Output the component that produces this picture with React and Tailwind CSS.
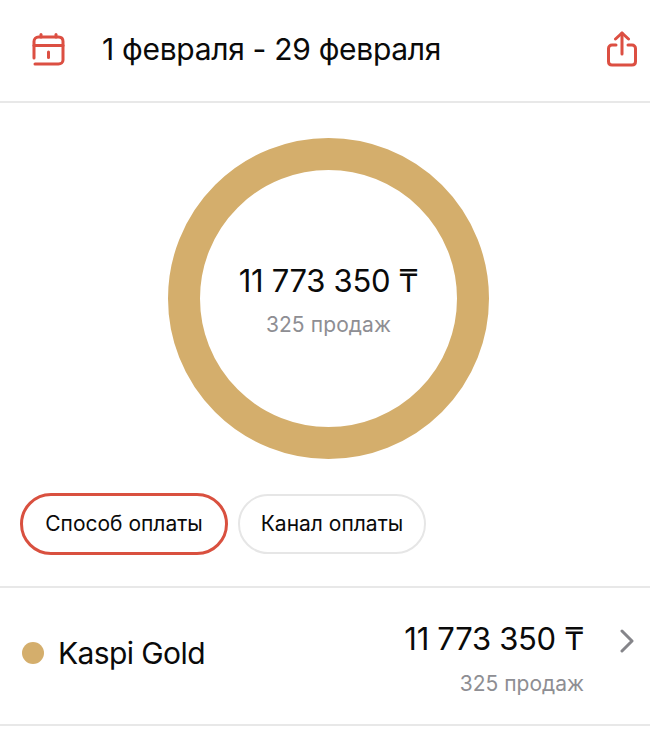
const GOLD = "#d4ae6c";

function CalendarIcon() {
  return (
    <svg width="34" height="34" viewBox="0 0 34 34" fill="none" stroke="#dc4f42" strokeWidth="3" strokeLinecap="round" strokeLinejoin="round">
      <path d="M4 32H27.5C30 32 32 30.5 32 28V9.5C32 7 30.5 5 27.5 5H7.5C5 5 3 7 3 9.5V26" />
      <path d="M3 13.5H32" />
      <path d="M10 2.5V5" />
      <path d="M25 2.5V5" />
      <path d="M17.5 20V25.5" />
    </svg>
  );
}

function ShareIcon() {
  return (
    <svg width="30" height="36" viewBox="0 0 30 36" fill="none" stroke="#dc4f42" strokeWidth="3" strokeLinecap="round" strokeLinejoin="round">
      <path d="M15 23V2" />
      <path d="M8.5 8L15 2L21.5 8" />
      <path d="M9 14H5C3 14 1.5 15.5 1.5 17.5V30.5C1.5 32.8 3 34 5 34H25C27 34 28.5 32.8 28.5 30.5V17.5C28.5 15.5 27 14 25 14H21" />
    </svg>
  );
}

function Chevron() {
  return (
    <svg width="16" height="24" viewBox="0 0 16 24" fill="none" stroke="#85858a" strokeWidth="3" strokeLinecap="round" strokeLinejoin="round">
      <path d="M3 2L13 12L3 22" />
    </svg>
  );
}

export default function App() {
  return (
    <div className="w-[650px] h-[735px] overflow-hidden bg-white text-[#0a0a0a] font-['Inter','Noto_Sans',sans-serif]">
      {/* header */}
      <div className="h-[103px] border-b-2 border-[#e8e8e8] flex items-center pl-[31px] pr-[13px] pb-[4px]">
        <CalendarIcon />
        <div className="ml-[37px] text-[30px] leading-[36px] tracking-[-0.3px]">1 февраля - 29 февраля</div>
        <div className="ml-auto">
          <ShareIcon />
        </div>
      </div>

      {/* donut */}
      <div className="flex justify-center pt-[35px] pl-[7px]">
        <div className="w-[321px] h-[321px] rounded-full border-[32px] border-[#d4ae6c] flex flex-col items-center justify-center pt-[2px]">
          <div className="text-[31px] leading-[36px] tracking-[-0.3px] whitespace-nowrap">11 773 350 ₸</div>
          <div className="mt-[14px] text-[21px] leading-[24px] tracking-[0.1px] text-[#8e8e93]">325 продаж</div>
        </div>
      </div>

      {/* filters */}
      <div className="flex items-center gap-[10px] pl-[20px] pt-[34px] pb-[31px] border-b-2 border-[#e8e8e8]">
        <div className="w-[208px] h-[62px] rounded-full border-[3px] border-[#d9503f] flex items-center justify-center text-[21px]">Способ оплаты</div>
        <div className="w-[188px] h-[60px] rounded-full border-2 border-[#e6e6e6] flex items-center justify-center text-[21px]">Канал оплаты</div>
      </div>

      {/* row */}
      <div className="h-[138px] border-b-2 border-[#e8e8e8] flex items-center pl-[22px] pr-[15px] pb-[6px]">
        <div className="w-[22px] h-[22px] rounded-full" style={{ background: GOLD }} />
        <div className="ml-[14px] text-[30px] leading-[36px] tracking-[-0.6px]">Kaspi Gold</div>
        <div className="ml-auto flex flex-col items-end mt-[11px]">
          <div className="text-[31px] leading-[36px] tracking-[-0.3px] whitespace-nowrap">11 773 350 ₸</div>
          <div className="mt-[15px] text-[21px] leading-[24px] text-[#8e8e93]">325 продаж</div>
        </div>
        <div className="ml-[35px] mb-[24px]">
          <Chevron />
        </div>
      </div>
    </div>
  );
}
